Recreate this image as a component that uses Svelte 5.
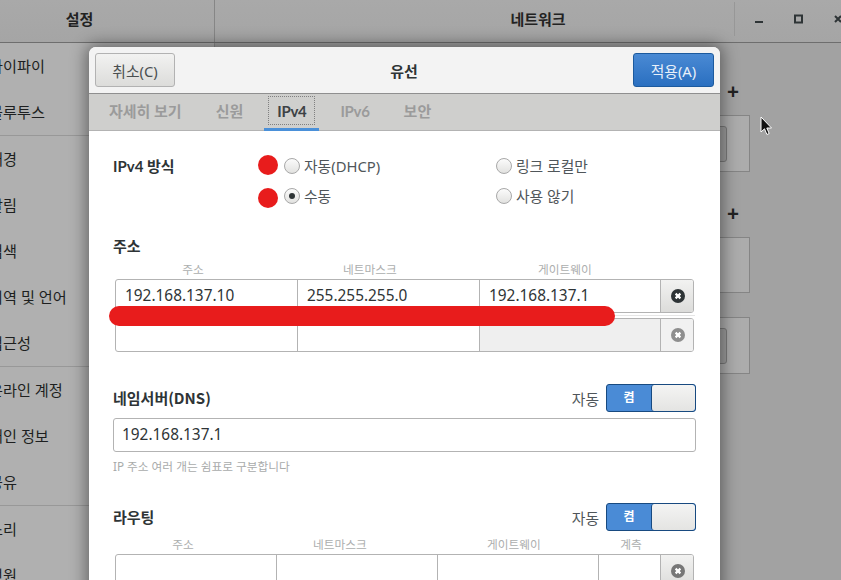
<script>
  const navGroups = [
    ['와이파이', '블루투스'],
    ['배경', '알림', '검색', '지역 및 언어', '접근성'],
    ['온라인 계정', '개인 정보', '공유'],
    ['소리', '전원']
  ];
  const tabs = ['자세히 보기', '신원', 'IPv4', 'IPv6', '보안'];
</script>

{#snippet clearIcon()}
  <svg width="14" height="14" viewBox="0 0 14 14">
    <circle cx="7" cy="7" r="7" fill="currentColor" />
    <path d="M4.6 4.6l4.8 4.8M9.4 4.6l-4.8 4.8" stroke="#fff" stroke-width="2.2" />
  </svg>
{/snippet}

{#snippet autoSwitch()}
  <div class="auto">
    <span>자동</span>
    <div class="switch">
      <span class="on">켬</span>
      <span class="knob"></span>
    </div>
  </div>
{/snippet}

<div class="screen">
  <header class="topbar">
    <div class="title side">설정</div>
    <div class="title main">네트워크</div>
    <div class="controls">
      <svg width="106" height="42" viewBox="0 0 106 42">
        <path d="M20 22h8" stroke="#2e3436" stroke-width="2" />
        <rect x="60" y="15.500" width="7" height="7" fill="none" stroke="#2e3436" stroke-width="2" />
        <path d="M100 16l6 6M106 16l-6 6" stroke="#2e3436" stroke-width="2" />
      </svg>
    </div>
  </header>

  <div class="content">
    <nav class="sidebar">
      {#each navGroups as group}
        <ul>
          {#each group as item}
            <li>{item}</li>
          {/each}
        </ul>
      {/each}
    </nav>
    <section class="panel">
      <div class="plus">+</div>
      <div class="box"><i></i></div>
      <div class="plus second">+</div>
      <div class="box middle"></div>
      <div class="box last"><i></i></div>
    </section>
  </div>

  <svg class="cursor" width="13" height="20" viewBox="0 0 13 20">
    <path d="M1 1v15l3.500-3.200 2.400 5.700 2.300-1-2.400-5.500h4.700z" fill="#111" stroke="#fff" stroke-width="1" />
  </svg>

  <div class="dialog">
    <div class="dialog-head">
      <button class="btn">취소(C)</button>
      <strong>유선</strong>
      <button class="btn primary">적용(A)</button>
    </div>

    <div class="tabs">
      {#each tabs as tab}
        <div class="tab" class:active={tab === 'IPv4'} class:latin={tab.startsWith('IPv')}><span>{tab}</span></div>
      {/each}
    </div>

    <div class="body">
      <div class="method">
        <b>IPv4 방식</b>
        <div class="radios">
          <label><span class="radio"></span>자동(DHCP)</label>
          <label><span class="radio"></span>링크 로컬만</label>
          <label><span class="radio checked"></span>수동</label>
          <label><span class="radio"></span>사용 않기</label>
        </div>
      </div>

      <h3 class="addr-title">주소</h3>
      <div class="heads addr-heads">
        <span>주소</span><span>네트마스크</span><span>게이트웨이</span>
      </div>
      <div class="cols addr row">
        <span class="cell">192.168.137.10</span>
        <span class="cell">255.255.255.0</span>
        <span class="cell">192.168.137.1</span>
        <span class="cell x dark">{@render clearIcon()}</span>
      </div>
      <div class="rule"></div>
      <div class="cols addr row">
        <span class="cell"></span>
        <span class="cell"></span>
        <span class="cell off"></span>
        <span class="cell x faded">{@render clearIcon()}</span>
      </div>

      <div class="line dns-line">
        <h3>네임서버(DNS)</h3>
        {@render autoSwitch()}
      </div>
      <div class="input">192.168.137.1</div>
      <p class="hint">IP 주소 여러 개는 쉼표로 구분합니다</p>

      <div class="line route-line">
        <h3>라우팅</h3>
        {@render autoSwitch()}
      </div>
      <div class="heads route-heads">
        <span>주소</span><span>네트마스크</span><span>게이트웨이</span><span>계측</span>
      </div>
      <div class="cols route row">
        <span class="cell"></span>
        <span class="cell"></span>
        <span class="cell"></span>
        <span class="cell"></span>
        <span class="cell x gray">{@render clearIcon()}</span>
      </div>
    </div>
  </div>

  <!-- red marks drawn over the screenshot -->
  <span class="dot one"></span>
  <span class="dot two"></span>
  <span class="bar"></span>
</div>

<style>
  :global(body) {
    margin: 0;
  }

  .screen {
    position: relative;
    width: 841px;
    height: 580px;
    overflow: hidden;
    background: #a0a0a0;
    color: #2e3436;
    font-family: "Noto Sans", "Noto Sans CJK KR", sans-serif;
    font-size: 14.8px;
  }

  .topbar {
    display: flex;
    height: 42px;
    background: linear-gradient(#a9a9a9, #a5a5a5);
    border-bottom: 1px solid #6e6e6e;
    box-sizing: content-box;
  }

  .title {
    display: flex;
    align-items: center;
    justify-content: center;
    font-weight: 700;
    font-size: 15px;
    color: #222;
    padding-bottom: 5px;
    box-sizing: border-box;
  }

  .side {
    width: 215px;
    padding-right: 55px;
    border-right: 1px solid #868686;
  }

  .main {
    width: 520px;
    padding-left: 126px;
    position: relative;
  }

  .main::after {
    content: '';
    position: absolute;
    right: 0;
    top: 2px;
    height: 34px;
    width: 1px;
    background: #979797;
  }

  .controls svg {
    display: block;
  }

  .content {
    display: flex;
    height: 537px;
  }

  .sidebar {
    width: 214px;
    flex: none;
    background: #b0b0b0;
    border-right: 1px solid #8c8c8c;
  }

  .sidebar ul {
    list-style: none;
    margin: 0;
    padding: 0;
    border-bottom: 1px solid #989898;
  }

  .sidebar li {
    height: 46px;
    line-height: 46px;
    margin-left: -11px;
    font-size: 15.2px;
    color: #1d1f20;
    white-space: nowrap;
  }

  .panel {
    flex: 1;
    padding: 37px 91px 0 0;
    background: #a2a2a2;
    display: flex;
    flex-direction: column;
    align-items: flex-end;
  }

  .plus {
    height: 22px;
    margin: 0 -1px 0 0;
    width: 34px;
    text-align: left;
    font-size: 21px;
    line-height: 22px;
    font-weight: 700;
    color: #222;
    position: relative;
    left: 10px;
  }

  .box {
    width: 100px;
    height: 57px;
    margin-top: 13px;
    background: #acacac;
    border: 1px solid #858585;
    box-sizing: border-box;
    display: flex;
    align-items: center;
    justify-content: flex-end;
    padding-right: 22px;
  }

  .box i {
    display: block;
    width: 60px;
    height: 34px;
    border: 1px solid #7a7a7a;
    border-radius: 3px;
    background: #9c9c9c;
  }

  .plus.second {
    margin-top: 30px;
  }

  .box.middle {
    height: 56px;
    margin-top: 13px;
  }

  .box.last {
    margin-top: 24px;
  }

  .cursor {
    position: absolute;
    left: 760px;
    top: 116px;
  }

  .dialog {
    position: absolute;
    left: 89px;
    top: 47px;
    width: 631px;
    height: 560px;
    background: #fff;
    border-radius: 7px 7px 0 0;
    box-shadow: 0 0 16px 3px rgba(0, 0, 0, 0.42);
  }

  .dialog-head {
    height: 46px;
    display: flex;
    align-items: center;
    justify-content: space-between;
    padding: 0 6px;
    background: #f3f3f3;
    border-radius: 7px 7px 0 0;
    border-bottom: 1px solid #8f8f8f;
  }

  .dialog-head strong {
    font-size: 15px;
    color: #2e3436;
  }

  .btn {
    width: 80px;
    height: 34px;
    padding: 0;
    border: 1px solid #b2b2b2;
    border-radius: 3px;
    background: linear-gradient(#f2f2f1, #dcdcda);
    font: inherit;
    color: #4a4f50;
  }

  .btn.primary {
    width: 81px;
    border-color: #1c5a9e;
    background: linear-gradient(#4a8ad4, #2a6fc0);
    color: #e8f0f9;
  }

  .tabs {
    display: flex;
    height: 36px;
    padding-left: 20px;
    gap: 34px;
    background: #cfcfcd;
    border-bottom: 1px solid #b3b3b3;
  }

  .tab {
    font-family: Lato, "Noto Sans CJK KR", sans-serif;
    font-size: 15px;
    font-weight: 700;
    color: #9b9b9b;
    display: flex;
    align-items: center;
    border-bottom: 3px solid transparent;
    margin-bottom: -1px;
    padding-bottom: 1px;
  }

  .tab.latin {
    letter-spacing: -0.3px;
  }

  .tab.active {
    color: #3d4245;
    padding: 0 13px 1px;
    margin: 0 -13px -1px;
    border-bottom-color: #4a90d9;
  }

  .tab.active span {
    height: 29px;
    margin: 0 -9px;
    padding: 0 9px;
    box-sizing: border-box;
    outline: 1px dotted #808080;
    outline-offset: -1px;
    display: flex;
    align-items: center;
  }

  .body {
    padding: 20px 24px 0;
  }

  .method {
    display: grid;
    grid-template-columns: 171px 1fr;
  }

  .method b {
    font-family: Lato, "Noto Sans CJK KR", sans-serif;
    line-height: 30px;
    font-size: 15px;
  }

  .radios {
    display: grid;
    grid-template-columns: 212px 1fr;
    grid-auto-rows: 30px;
    color: #50565a;
  }

  .radios label {
    display: flex;
    align-items: center;
    gap: 4px;
    padding-bottom: 1px;
  }

  .radio {
    width: 14px;
    height: 14px;
    border: 1px solid #a8a8a8;
    border-radius: 50%;
    background: linear-gradient(#fbfbfb, #e2e2e0);
    display: flex;
    align-items: center;
    justify-content: center;
  }

  .radio.checked::after {
    content: '';
    width: 6px;
    height: 6px;
    border-radius: 50%;
    background: #2e3436;
  }

  h3 {
    margin: 0;
    font-family: "Noto Sans CJK KR", sans-serif;
    font-size: 15px;
    font-weight: 700;
    line-height: 20px;
    color: #2e3436;
  }

  .addr-title {
    margin-top: 25px;
  }

  .cols {
    display: grid;
    margin-left: 2px;
    width: 579px;
  }

  .cols.addr {
    grid-template-columns: 182px 182px 181px 34px;
  }

  .cols.route {
    grid-template-columns: 161px 161px 161px 62px 34px;
  }

  .heads {
    display: grid;
    margin-left: 2px;
    height: 18px;
    margin-top: 5px;
    font-size: 11.7px;
    line-height: 16px;
    color: #acaeae;
    text-align: center;
  }

  /* column captions sit off-centre from the cells below them */
  .addr-heads {
    grid-template-columns: 156px 198px 192px;
  }

  .route-heads {
    grid-template-columns: 136px 178px 170px 64px;
  }

  .row {
    height: 34px;
    border: 1px solid #b3b3b3;
    border-radius: 3px;
    box-sizing: border-box;
    overflow: hidden;
  }

  .cell {
    display: flex;
    align-items: center;
    padding: 0 0 1px 9px;
    border-right: 1px solid #b3b3b3;
    font-size: 15.4px;
    color: #2e3436;
    box-sizing: border-box;
  }

  .cell.off {
    background: #efefef;
  }

  .cell.x {
    justify-content: center;
    padding: 0;
    border-right: 0;
    background: linear-gradient(#f2f2f1, #dcdcda);
  }

  .cell.dark {
    color: #2e3436;
  }

  .cell.faded {
    color: #8e8e8e;
    background: #f1f1f1;
  }

  .cell.gray {
    color: #777;
  }

  .rule {
    height: 1px;
    margin: 2px 0 2px 2px;
    width: 580px;
    background: #e6e6e6;
  }

  .line {
    display: flex;
    align-items: center;
    justify-content: space-between;
    height: 28px;
  }

  .dns-line {
    margin-top: 32px;
  }

  .route-line {
    margin-top: 29px;
  }

  .auto {
    display: flex;
    align-items: center;
    gap: 7px;
    color: #50565a;
  }

  .switch {
    display: flex;
    width: 90px;
    height: 28px;
    box-sizing: border-box;
    border: 1px solid #184a80;
    border-radius: 3px;
    background: #4a8bd6;
    overflow: hidden;
  }

  .on {
    width: 44px;
    text-align: center;
    font-size: 12px;
    font-weight: 700;
    line-height: 25px;
    color: #fff;
  }

  .knob {
    flex: 1;
    border-left: 1px solid #184a80;
    border-radius: 3px;
    background: linear-gradient(#f4f4f3, #e4e4e2);
  }

  .input {
    margin-top: 6px;
    height: 34px;
    box-sizing: border-box;
    padding: 0 8px 1px;
    border: 1px solid #b3b3b3;
    border-radius: 3px;
    display: flex;
    align-items: center;
    font-size: 15.4px;
  }

  .hint {
    margin: 6px 0 0;
    font-size: 11.7px;
    line-height: 16px;
    color: #a9abab;
  }

  .dot {
    position: absolute;
    left: 258px;
    width: 20px;
    height: 20px;
    border-radius: 50%;
    background: #e81c1c;
  }

  .dot.one {
    top: 155px;
  }

  .dot.two {
    top: 188px;
  }

  .bar {
    position: absolute;
    left: 109px;
    top: 306px;
    width: 506px;
    height: 20px;
    border-radius: 10px;
    background: #e81c1c;
  }
</style>
